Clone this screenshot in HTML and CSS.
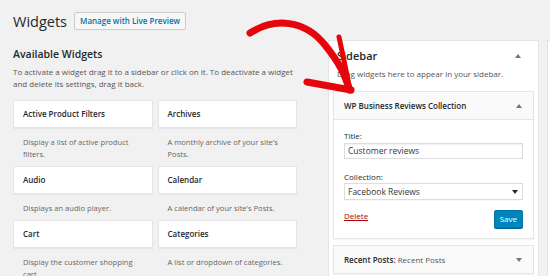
FILE: index.html
```html
<!DOCTYPE html>
<html lang="en">

<head>
    <meta charset="UTF-8">
    <meta name="viewport" content="width=device-width, initial-scale=1.0">
    <title>Widgets</title>
    <link rel="stylesheet" href="styles.css">
</head>

<body>
    <div class="wrap">
        <div class="head">
            <h1>Widgets</h1>
            <span class="live-btn">Manage with Live Preview</span>
        </div>

        <div class="cols">
            <div class="available">
                <h2>Available Widgets</h2>
                <p class="intro">To activate a widget drag it to a sidebar or click on it. To deactivate a widget and delete its settings, drag it back.</p>
                <div class="grid">
                    <div class="item">
                        <div class="card">Active Product Filters</div>
                        <p class="desc">Display a list of active product filters.</p>
                    </div>
                    <div class="item">
                        <div class="card">Archives</div>
                        <p class="desc">A monthly archive of your site’s Posts.</p>
                    </div>
                    <div class="item">
                        <div class="card">Audio</div>
                        <p class="desc">Displays an audio player.</p>
                    </div>
                    <div class="item">
                        <div class="card">Calendar</div>
                        <p class="desc">A calendar of your site’s Posts.</p>
                    </div>
                    <div class="item">
                        <div class="card">Cart</div>
                        <p class="desc">Display the customer shopping cart.</p>
                    </div>
                    <div class="item">
                        <div class="card">Categories</div>
                        <p class="desc">A list or dropdown of categories.</p>
                    </div>
                </div>
            </div>

            <div class="sidebars">
                <div class="panel">
                    <div class="panel-head">
                        <h2>Sidebar</h2>
                        <span class="tri up"></span>
                    </div>
                    <p class="panel-desc">Drag widgets here to appear in your sidebar.</p>

                    <div class="widget">
                        <div class="widget-top">
                            <h3>WP Business Reviews Collection</h3>
                            <span class="tri up"></span>
                        </div>
                        <div class="widget-inside">
                            <label>Title:</label>
                            <div class="field">Customer reviews</div>
                            <label class="second">Collection:</label>
                            <div class="field select">Facebook Reviews<span class="tri down dark"></span></div>
                            <div class="actions">
                                <a class="delete">Delete</a>
                                <span class="save">Save</span>
                            </div>
                        </div>
                    </div>

                    <div class="widget">
                        <div class="widget-top">
                            <h3>Recent Posts: <span class="in-title">Recent Posts</span></h3>
                            <span class="tri down"></span>
                        </div>
                    </div>
                </div>
                <div class="panel ghost"></div>
            </div>
        </div>

        <svg class="arrow" width="550" height="276" viewBox="0 0 550 276">
            <path d="M250 33 C275 17 305 20 325 45 S345 79 350 90" fill="none" stroke="#e4060b" stroke-width="7" stroke-linecap="round" />
            <path d="M339 37 Q344 60 350 90" fill="none" stroke="#e4060b" stroke-width="5" stroke-linecap="round" />
            <path d="M307 82 L351 90" fill="none" stroke="#e4060b" stroke-width="7" stroke-linecap="round" />
        </svg>
    </div>
</body>

</html>
```

FILE: styles.css
```css
body {
    font-family: 'Open Sans', Arial, sans-serif;
    margin: 0;
    background: #f1f1f1;
    color: #555;
    overflow: hidden;
}

.wrap {
    position: relative;
    height: 276px;
    padding: 11px 0 0 13px;
    box-sizing: border-box;
    overflow: hidden;
}

.head {
    display: flex;
    align-items: center;
    gap: 7px;
    height: 20px;
}

.head h1 {
    margin: 0;
    font-size: 14.5px;
    font-weight: 400;
    color: #23282d;
}

.live-btn {
    height: 16px;
    line-height: 16px;
    padding: 0 5px;
    border: 1px solid #ccc;
    border-radius: 2px;
    background: #f7f7f7;
    color: #0073aa;
    font-size: 8px;
    font-weight: 600;
}

.cols {
    display: flex;
    gap: 31px;
    margin-top: 9px;
}

/* available widgets */

.available {
    width: 284px;
    flex-shrink: 0;
}

.available h2 {
    margin: 7px 0 0;
    font-size: 10.5px;
    line-height: 14px;
    font-weight: 600;
    color: #23282d;
}

.intro {
    margin: 5px 0 10px;
    font-size: 8px;
    line-height: 12px;
}

.grid {
    display: grid;
    grid-template-columns: 1fr 1fr;
    column-gap: 5px;
}

.item {
    margin-bottom: 6px;
}

.card {
    height: 26px;
    line-height: 26px;
    padding: 0 9px;
    background: #fff;
    border: 1px solid #e5e5e5;
    box-shadow: 0 1px 1px rgba(0, 0, 0, 0.04);
    font-size: 8px;
    font-weight: 600;
    color: #23282d;
}

.desc {
    margin: 8px 0 0;
    padding: 0 6px 0 10px;
    font-size: 7.6px;
    line-height: 12px;
    color: #666;
}

/* sidebar */

.sidebars {
    display: flex;
    gap: 8px;
    align-items: flex-start;
}

.panel {
    width: 201px;
    flex-shrink: 0;
    height: 260px;
    padding: 0 4px;
    background: #fff;
    border: 1px solid #e5e5e5;
}

.panel.ghost {
    width: 100px;
}

.panel-head {
    display: flex;
    align-items: center;
    justify-content: space-between;
    padding: 8px 13px 0 4px;
}

.panel-head h2 {
    margin: 0;
    font-size: 11px;
    line-height: 14px;
    font-weight: 600;
    color: #23282d;
}

.panel-desc {
    margin: 5px 0 11px;
    padding-left: 4px;
    font-size: 8px;
    line-height: 12px;
}

.tri {
    width: 0;
    height: 0;
    border-left: 3px solid transparent;
    border-right: 3px solid transparent;
}

.tri.up {
    border-bottom: 4px solid #72777c;
}

.tri.down {
    border-top: 4px solid #72777c;
}

.tri.dark {
    border-top-color: #23282d;
}

.widget {
    background: #fff;
    border: 1px solid #e5e5e5;
    box-shadow: 0 1px 1px rgba(0, 0, 0, 0.04);
    margin-bottom: 6px;
}

.widget-top {
    display: flex;
    align-items: center;
    justify-content: space-between;
    height: 27px;
    padding: 0 11px 0 10px;
    background: #fafafa;
}

.widget-top h3 {
    margin: 0;
    font-size: 8px;
    font-weight: 600;
    color: #23282d;
}

.in-title {
    font-weight: 400;
    color: #555;
}

.widget-inside {
    display: flex;
    flex-direction: column;
    padding: 10px 10px 10px;
    border-top: 1px solid #e5e5e5;
}

.widget-inside label {
    font-size: 8px;
    line-height: 12px;
    color: #23282d;
}

.widget-inside label.second {
    margin-top: 12px;
}

.field {
    margin-top: 1px;
    height: 14px;
    line-height: 14px;
    padding: 0 3px;
    border: 1px solid #ddd;
    box-shadow: inset 0 1px 2px rgba(0, 0, 0, 0.07);
    font-size: 8.5px;
    color: #32373c;
}

.field.select {
    margin-top: 0;
    height: 15px;
    line-height: 15px;
    display: flex;
    align-items: center;
    justify-content: space-between;
    padding-right: 4px;
    box-shadow: 0 1px 0 rgba(0, 0, 0, 0.03);
}

.actions {
    display: flex;
    justify-content: space-between;
    align-items: flex-start;
    margin-top: 10px;
}

.delete {
    font-size: 8px;
    line-height: 12px;
    color: #a00;
    text-decoration: underline;
}

.save {
    height: 16px;
    line-height: 16px;
    padding: 0 5px;
    background: #0085ba;
    border: 1px solid #0073aa;
    border-radius: 2px;
    box-shadow: 0 1px 0 #006799;
    color: #fff;
    font-size: 8px;
}

.arrow {
    position: absolute;
    top: 0;
    left: 0;
    pointer-events: none;
}
```
